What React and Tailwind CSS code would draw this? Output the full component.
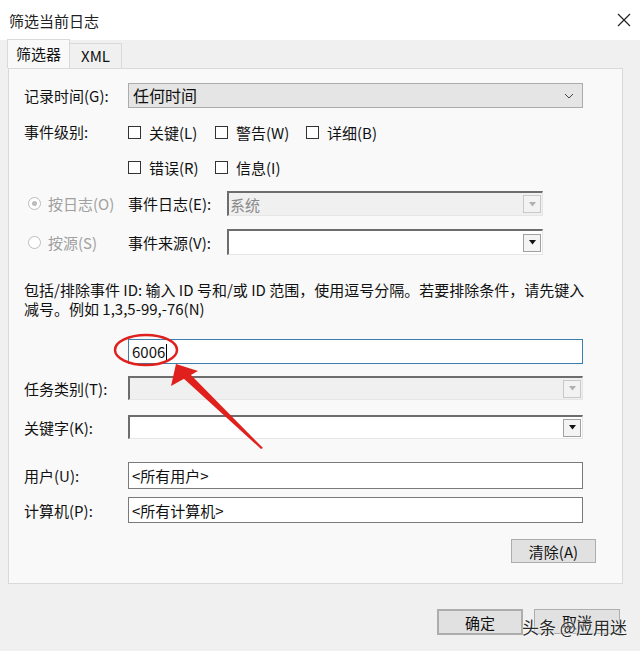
const font = { fontFamily: '"Noto Sans CJK SC", "Noto Sans", sans-serif' }

function Checkbox({ label, className = "" }) {
  return (
    <div className={`flex items-center gap-[8px] ${className}`}>
      <span className="h-[13px] w-[13px] border border-[#333] bg-white" />
      <span>{label}</span>
    </div>
  )
}

function Radio({ label }) {
  return (
    <div className="flex items-center gap-[7px] pl-[4px] text-[#a0a0a0]">
      <span className="flex h-[13px] w-[13px] items-center justify-center rounded-full border border-[#bcbcbc] bg-white">
        {label.startsWith("按日志") && <span className="h-[5px] w-[5px] rounded-full bg-[#bcbcbc]" />}
      </span>
      <span>{label}</span>
    </div>
  )
}

function OldCombo({ disabled, text, className }) {
  return (
    <div
      className={`flex items-center justify-between border-t-2 border-l-2 border-b border-r border-t-[#6d6d6d] border-l-[#6d6d6d] border-b-[#e6e6e6] border-r-[#e6e6e6] ${disabled ? "bg-[#f0f0f0]" : "bg-white"} ${className}`}
    >
      <span className="pl-[1px] text-[#8a8a8a]">{text}</span>
      <span
        className={`mr-[1px] flex h-[18px] w-[18px] items-center justify-center border ${disabled ? "border-[#c8c8c8] bg-[#f2f2f2]" : "border-[#a0a0a0] bg-[#f4f4f4]"}`}
      >
        <svg width="9" height="5" viewBox="0 0 9 5">
          <path d="M1 0 L8 0 L4.5 4.5 Z" fill={disabled ? "#b0b0b0" : "#111"} />
        </svg>
      </span>
    </div>
  )
}

function TextBox({ value, className = "" }) {
  return (
    <div className={`flex items-center border border-[#7a7a7a] bg-white pl-[3px] ${className}`}>
      {value}
    </div>
  )
}

function Btn({ children, className = "" }) {
  return (
    <div className={`flex items-center justify-center border border-[#adadad] bg-[#e1e1e1] ${className}`}>
      {children}
    </div>
  )
}

export default function App() {
  return (
    <div className="relative h-[651px] w-[640px] overflow-hidden bg-[#f0f0f0] text-[15px] leading-[19px] text-[#111]" style={font}>
      {/* title bar */}
      <div className="flex h-[40px] items-center justify-between bg-white pl-[9px] pr-[8px]">
        <span className="text-[15px] text-[#222]">筛选当前日志</span>
        <svg width="16" height="16" viewBox="0 0 16 16">
          <path d="M2 2 L14 14 M14 2 L2 14" stroke="#222" strokeWidth="1.2" />
        </svg>
      </div>

      {/* tabs */}
      <div className="flex h-[28px] items-end pl-[7px]">
        <div className="relative z-10 flex h-[29px] w-[63px] items-center justify-center border border-b-0 border-[#d9d9d9] bg-[#f9f9f9] pb-[2px]">
          筛选器
        </div>
        <div className="flex h-[25px] w-[52px] items-center justify-center border border-l-0 border-b-0 border-[#d9d9d9] bg-[#f0f0f0] pb-[2px]">
          XML
        </div>
      </div>

      {/* panel */}
      <div className="ml-[8px] flex h-[516px] w-[615px] flex-col border border-[#d9d9d9] bg-[#f9f9f9] pl-[15px] pt-[14px]">
        <div className="flex h-[25px] items-center">
          <span className="w-[104px]">记录时间(G):</span>
          <div className="flex h-[25px] w-[455px] items-center justify-between border border-[#acacac] bg-[#e5e5e5] pl-[4px] pr-[8px]">
            <span className="text-[16px]">任何时间</span>
            <svg width="10" height="6" viewBox="0 0 10 6">
              <path d="M1 1 L5 5 L9 1" stroke="#444" fill="none" strokeWidth="1" />
            </svg>
          </div>
        </div>

        <div className="mt-[14px] flex h-[20px] items-center">
          <span className="w-[104px] self-start">事件级别:</span>
          <Checkbox label="关键(L)" className="w-[87px]" />
          <Checkbox label="警告(W)" className="w-[91px]" />
          <Checkbox label="详细(B)" />
        </div>
        <div className="mt-[15px] flex h-[20px] items-center pl-[104px]">
          <Checkbox label="错误(R)" className="w-[87px]" />
          <Checkbox label="信息(I)" />
        </div>

        <div className="mt-[14px] flex h-[25px] items-center">
          <div className="w-[104px]">
            <Radio label="按日志(O)" />
          </div>
          <span className="w-[99px]">事件日志(E):</span>
          <OldCombo disabled text="系统" className="h-[25px] w-[316px]" />
        </div>
        <div className="mt-[13px] flex h-[26px] items-center">
          <div className="w-[104px]">
            <Radio label="按源(S)" />
          </div>
          <span className="w-[99px]">事件来源(V):</span>
          <OldCombo text="" className="h-[26px] w-[316px]" />
        </div>

        <p className="mt-[25px] pr-[10px]">
          包括/排除事件 ID: 输入 ID 号和/或 ID 范围，使用逗号分隔。若要排除条件，请先键入
          <br />
          减号。例如 1,3,5-99,-76(N)
        </p>

        <div className="mt-[21px] flex">
          <div className="w-[104px]" />
          <div className="flex h-[25px] w-[455px] items-center border border-[#3f7fae] bg-white pl-[3px]">
            <span>6006</span>
            <span className="ml-[1px] h-[16px] w-[1px] bg-black" />
          </div>
        </div>

        <div className="mt-[12px] flex h-[24px] items-center">
          <span className="w-[104px]">任务类别(T):</span>
          <OldCombo disabled text="" className="h-[24px] w-[455px]" />
        </div>
        <div className="mt-[15px] flex h-[24px] items-center">
          <span className="w-[104px]">关键字(K):</span>
          <OldCombo text="" className="h-[24px] w-[455px]" />
        </div>

        <div className="mt-[23px] flex h-[27px] items-center">
          <span className="w-[104px]">用户(U):</span>
          <TextBox value="<所有用户>" className="h-[27px] w-[455px]" />
        </div>
        <div className="mt-[8px] flex h-[26px] items-center">
          <span className="w-[104px]">计算机(P):</span>
          <TextBox value="<所有计算机>" className="h-[26px] w-[455px]" />
        </div>

        <div className="mt-[16px] flex justify-end pr-[26px]">
          <Btn className="h-[24px] w-[85px]">清除(A)</Btn>
        </div>
      </div>

      {/* bottom buttons */}
      <div className="mt-[25px] flex justify-end gap-[11px] pr-[20px]">
        <Btn className="h-[26px] w-[86px] border-2 border-[#0078d7]">确定</Btn>
        <Btn className="h-[25px] w-[86px]">取消</Btn>
      </div>

      {/* watermark */}
      <div
        className="absolute left-[522px] top-[617px] text-[17px] text-[#2a2a2a]"
        style={{ textShadow: "0 0 2px #fff, 0 0 2px #fff" }}
      >
        头条 @应用迷
      </div>

      {/* red annotation */}
      <svg className="pointer-events-none absolute left-0 top-0" width="640" height="651" viewBox="0 0 640 651">
        <ellipse cx="146" cy="350" rx="31" ry="15" fill="none" stroke="#e0201c" strokeWidth="2.5" />
        <path d="M176 364 L171 386 L198 371 Z" fill="#e0201c" />
        <path d="M182 377 L189 373 L263 448 L261 449 Z" fill="#e0201c" />
      </svg>
    </div>
  )
}
